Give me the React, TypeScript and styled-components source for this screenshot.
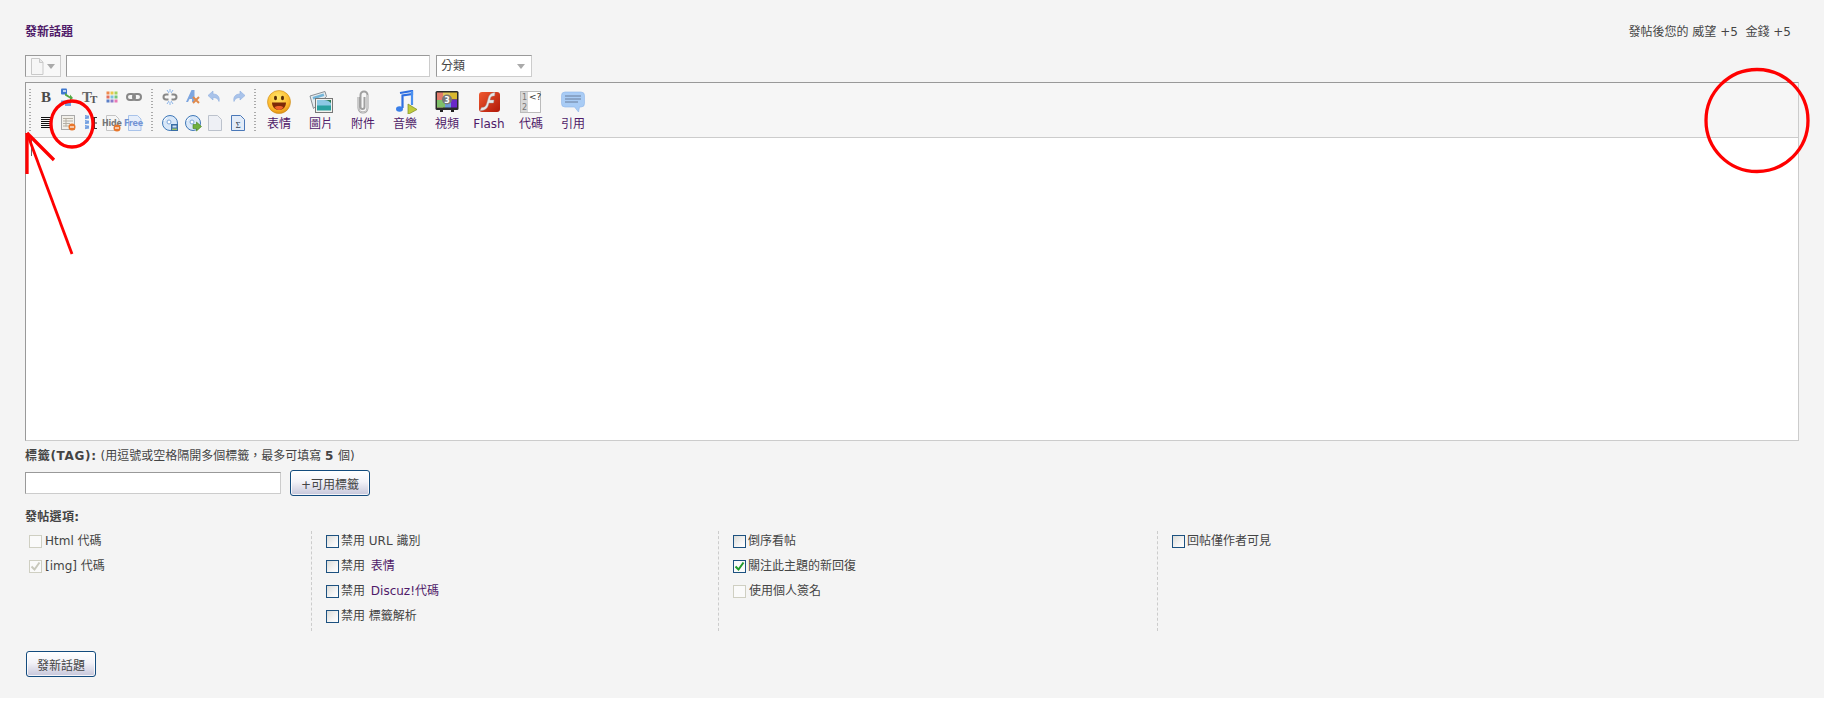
import React from "react";
import styled, { createGlobalStyle } from "styled-components";

const FONT = `"DejaVu Sans", "Noto Sans CJK TC", sans-serif`;
const PURPLE = "#4f1a68";

const Global = createGlobalStyle`
  html, body { margin: 0; padding: 0; background: #fff; }
  body { font: 12px/1.2 ${FONT}; color: #444; }
`;

const Page = styled.div`
  position: relative;
  box-sizing: border-box;
  width: 1824px;
  height: 698px;
  padding: 0 25px;
  background: #f4f4f4;
  overflow: hidden;
`;
const HeadRow = styled.div`
  display: flex;
  justify-content: space-between;
  align-items: center;
  height: 24px;
  padding-top: 20px;
  margin-bottom: 11px;
`;
const Title = styled.h1`
  margin: 0;
  font-size: 12px;
  font-weight: 700;
  color: ${PURPLE};
`;
const Credit = styled.div`
  margin-right: 8px;
  white-space: pre;
  color: #444;
`;
const FormRow = styled.div`
  display: flex;
  gap: 5px;
  height: 22px;
  margin-bottom: 5px;
`;
const boxBorders = `
  box-sizing: border-box;
  border: 1px solid;
  border-color: #999 #ccc #ccc #999;
`;
const IconSelect = styled.div`
  ${boxBorders}
  width: 36px;
  display: flex;
  align-items: center;
  padding-left: 4px;
  gap: 3px;
  background: #f8f8f8;
`;
const TextBox = styled.div<{ $w: number }>`
  ${boxBorders}
  width: ${(p) => p.$w}px;
  height: 22px;
  background: #fff;
`;
const TypeSelect = styled.div`
  ${boxBorders}
  width: 96px;
  margin-left: 1px;
  display: flex;
  align-items: center;
  justify-content: space-between;
  padding: 0 6px 0 4px;
  background: #fff;
  color: #444;
`;
const Caret = styled.span`
  width: 0;
  height: 0;
  border: 4px solid transparent;
  border-top: 5px solid #aaa;
  border-bottom: 0;
`;
const Editor = styled.div`
  box-sizing: border-box;
  height: 359px;
  border: 1px solid;
  border-color: #999 #ccc #ccc #999;
  background: #fff;
`;
const Toolbar = styled.div`
  box-sizing: border-box;
  display: flex;
  align-items: flex-start;
  height: 55px;
  padding-left: 3px;
  background: #f6f6f6;
  border-bottom: 1px solid #ccc;
`;
const Grip = styled.div<{ $after: number }>`
  display: flex;
  flex-direction: column;
  gap: 3px;
  flex: none;
  width: 2px;
  height: 43px;
  margin: 6px ${(p) => p.$after}px 0 0;
  &::before, &::after {
    content: "";
    flex: 1;
    background: repeating-linear-gradient(to bottom, #aaa 0 1px, transparent 1px 3px);
  }
`;
const SmallGrid = styled.div<{ $cell: number; $cols: number; $after: number }>`
  display: grid;
  flex: none;
  grid-template-columns: repeat(${(p) => p.$cols}, ${(p) => p.$cell}px);
  grid-auto-rows: 26px;
  padding-top: 1px;
  margin-right: ${(p) => p.$after}px;
`;
const SmallCell = styled.div`
  display: flex;
  align-items: center;
  justify-content: center;
`;
const BigBtn = styled.div`
  flex: none;
  width: 42px;
  height: 54px;
  display: flex;
  flex-direction: column;
  align-items: center;
  padding-top: 7px;
  box-sizing: border-box;
  gap: 3px;
  color: ${PURPLE};
  line-height: 14px;
`;
const EditArea = styled.div`
  padding-left: 5px;
`;
const TextCaret = styled.div`
  width: 1px;
  height: 18px;
  background: #666;
`;
const TagLabel = styled.div`
  margin-top: 7px;
  height: 16px;
  line-height: 16px;
  color: #444;
`;
const Strong = styled.strong`
  font-weight: 700;
  letter-spacing: 0.7px;
`;
const TagRow = styled.div`
  display: flex;
  align-items: center;
  gap: 9px;
  height: 26px;
  margin-top: 6px;
`;
const Button = styled.button`
  box-sizing: border-box;
  height: 26px;
  padding: 0 10px;
  border: 1px solid #134b7e;
  border-radius: 3px;
  background: linear-gradient(to bottom, #fff 0%, #f2f2f8 45%, #c6c6da 100%);
  box-shadow: inset 0 0 0 1px rgba(255, 255, 255, 0.8);
  color: #444;
  font: 12px ${FONT};
`;
const SubHead = styled.div`
  margin-top: 14px;
  height: 14px;
  line-height: 14px;
  font-weight: 700;
  letter-spacing: 0.3px;
  color: #444;
`;
const Options = styled.div`
  display: grid;
  grid-template-columns: 286px 407px 439px 1fr;
  margin-top: 7px;
  height: 100px;
`;
const OptCol = styled.div<{ $first?: boolean }>`
  box-sizing: border-box;
  display: flex;
  flex-direction: column;
  gap: 4px;
  padding-left: ${(p) => (p.$first ? 4 : 14)}px;
  border-left: ${(p) => (p.$first ? "0" : "1px dashed #ccc")};
`;
const OptRow = styled.label`
  display: flex;
  align-items: center;
  gap: 2px;
  height: 21px;
  color: #444;
  white-space: pre;
`;
const Check = styled.span<{ $muted?: boolean; $plain?: boolean }>`
  box-sizing: border-box;
  flex: none;
  display: flex;
  align-items: center;
  justify-content: center;
  width: 13px;
  height: 13px;
  margin-right: ${(p) => (p.$muted ? 1 : 0)}px;
  border: 1px solid ${(p) => (p.$muted ? "#cfcfc2" : "#1c5180")};
  background: ${(p) =>
    p.$muted || p.$plain ? "#fafafa" : "linear-gradient(135deg, #dcdcd8 0%, #f4f4f4 60%, #fff 100%)"};
`;
const Link = styled.span`
  color: ${PURPLE};
`;
const SubmitWrap = styled.div`
  margin-top: 20px;
  padding-left: 1px;
`;
const Overlay = styled.svg`
  position: absolute;
  top: 0;
  left: 0;
  width: 1824px;
  height: 709px;
  pointer-events: none;
`;

const Doc = ({ size = 14 }: { size?: number }) => (
  <svg width={size} height={size + 3} viewBox="0 0 14 17">
    <path d="M1.5.5h8l3.5 3.5v12.5h-11.500z" fill="#f6f6f6" stroke="#c9c9c9" />
    <path d="M9.500.5v4h3.500" fill="#e8e8e8" stroke="#c9c9c9" />
  </svg>
);

const S = ({ children, w = 18, h = 18 }: { children: React.ReactNode; w?: number; h?: number }) => (
  <svg width={w} height={h} viewBox={`0 0 ${w} ${h}`}>
    {children}
  </svg>
);

const small: React.ReactNode[] = [
  <S key="b">
    <text x="9" y="14" textAnchor="middle" fontFamily="Liberation Serif" fontWeight="700" fontSize="15" fill="#4a4a4a">B</text>
  </S>,
  <S key="col">
    <rect x="2" y="0.500" width="6" height="6" rx="1" fill="#3f78d0" />
    <rect x="4" y="2" width="3" height="2" fill="#bcd3f2" />
    <path d="M2 12.500h14v2h-4v3.500h-6v-3.500h-4z" fill="#6fa3e6" />
    <path d="M6 5l5 3.500v-2l3 3.500-3 2.500v-2l-5-3z" fill="#55a844" />
  </S>,
  <S key="tr">
    <text x="1" y="14" fontFamily="Liberation Serif" fontWeight="700" fontSize="15" fill="#666">T</text>
    <text x="9" y="14.500" fontFamily="Liberation Serif" fontWeight="700" fontSize="11" fill="#555">T</text>
  </S>,
  <S key="grid">
    {["#ef8a4c", "#e9c84a", "#a4d35e", "#e36f5c", "#7cc0e0", "#73c57a", "#5a7fc7", "#8b79c9", "#e878b5"].map((c, i) => (
      <rect key={c} x={3.500 + (i % 3) * 4} y={3.500 + Math.floor(i / 3) * 4} width="3" height="3" fill={c} />
    ))}
  </S>,
  <S key="link">
    <rect x="2" y="6" width="8" height="6" rx="3" fill="none" stroke="#888" strokeWidth="2" />
    <rect x="8" y="6" width="8" height="6" rx="3" fill="none" stroke="#888" strokeWidth="2" />
  </S>,
  <S key="unlink">
    <path d="M7.500 6.500H5a2.500 2.500 0 000 5h2.500M10.500 6.500H13a2.500 2.500 0 010 5h-2.500" fill="none" stroke="#888" strokeWidth="2" />
    <path d="M6 2l2 3M12 2l-2 3M6 16l2-3M12 16l-2-3M9 1v3M9 14v3" stroke="#8ab4ea" />
  </S>,
  <S key="clear">
    <path d="M2 14L7.500 2h3v12H8v-3H5.500l-1.500 3z" fill="#7ea6e0" />
    <path d="M9 9l6 6M15 9l-6 6" stroke="#e08a4c" strokeWidth="2" />
  </S>,
  <S key="undo">
    <path d="M7 3L2 7.500 7 12V9.500c3 0 5 1 6 4 1-4-1-7.500-6-7.500z" fill="#a9c3ea" stroke="#8eaedf" strokeWidth=".6" />
  </S>,
  <S key="redo">
    <path d="M11 3l5 4.500L11 12V9.500c-3 0-5 1-6 4-1-4 1-7.500 6-7.500z" fill="#a9c3ea" stroke="#8eaedf" strokeWidth=".6" />
  </S>,
  <S key="just">
    <path d="M4 3.500h10M4 5.500h10M4 7.500h10M4 9.500h10M4 11.500h10M4 13.500h10" stroke="#111" />
  </S>,
  <S key="table">
    <rect x="2.500" y="1.500" width="13" height="14" fill="#f2f0ea" stroke="#aaa" />
    <path d="M4 4.500h10M4 7h10M4 9.500h7M4 12h6M7 4.500v8" stroke="#b5b0a5" />
    <circle cx="13" cy="13" r="3.500" fill="#e8762b" />
    <path d="M11 13h4" stroke="#fff" strokeWidth="1.200" />
  </S>,
  <S key="www">
    <path d="M11 3.500h5M11 9h5M11 14.500h5M13.500 3.500v11" stroke="#333" />
    <g stroke="#6b9be0" fill="none">
      <path d="M4 1.500l4 .8-4 .8 4 .8-4 .8M4 6.500l4 .8-4 .8 4 .8-4 .8M4 11.500l4 .8-4 .8 4 .8-4 .8" />
    </g>
  </S>,
  <S key="hide" w={20}>
    <path d="M4.500 1.500h9l3.500 3.500v11.500h-12.500z" fill="#f6f6f6" stroke="#c4c4c4" />
    <text x="0" y="12" fontFamily="DejaVu Sans" fontWeight="700" fontSize="8" letterSpacing="-.2" fill="#777">Hide</text>
    <circle cx="15" cy="14" r="3.500" fill="#e8762b" />
    <path d="M13 14h4" stroke="#fff" strokeWidth="1.200" />
  </S>,
  <S key="free" w={20}>
    <path d="M4.500 1.500h9l3.500 3.500v11.500h-12.500z" fill="#e6eefa" stroke="#a9c3ea" />
    <text x="0" y="12" fontFamily="DejaVu Sans" fontWeight="700" fontSize="8" letterSpacing="-.2" fill="#7394d4">Free</text>
  </S>,
  <S key="disc1">
    <circle cx="9" cy="9" r="7.500" fill="#d8e7f8" stroke="#3f78b8" />
    <circle cx="8" cy="8" r="2" fill="#fff" stroke="#7ea6d8" />
    <path d="M3 7a5 5 0 013-3.500" stroke="#fff" fill="none" />
    <rect x="10" y="10" width="7" height="7" fill="#3a6ea5" />
    <rect x="11.500" y="11.500" width="4" height="2" fill="#cfe0f2" />
    <rect x="11" y="14.500" width="5" height="1.500" fill="#9cc46a" />
  </S>,
  <S key="disc2">
    <circle cx="9" cy="9" r="7.500" fill="#d8e7f8" stroke="#3f78b8" />
    <circle cx="8" cy="8" r="2" fill="#fff" stroke="#7ea6d8" />
    <path d="M3 7a5 5 0 013-3.500" stroke="#fff" fill="none" />
    <path d="M9 10.500h3.500V8l5 4.500-5 4.500v-2.500H9z" fill="#6fb03e" stroke="#47801f" strokeWidth=".6" />
  </S>,
  <S key="doc">
    <path d="M2.500 1.500h9l4 4v11h-13z" fill="#eef0f5" stroke="#bcc2cc" />
  </S>,
  <S key="sigma">
    <path d="M2.500 1.500h9l4 4v11h-13z" fill="#e3ecf8" stroke="#4a78b8" />
    <text x="9" y="14" textAnchor="middle" fontFamily="Liberation Serif" fontSize="9" fill="#345">Σ</text>
  </S>,
];

const big: { label: string; icon: React.ReactNode }[] = [
  {
    label: "表情",
    icon: (
      <S w={24} h={24}>
        <defs>
          <radialGradient id="sm" cx="45%" cy="30%" r="75%">
            <stop offset="0" stopColor="#ffe76a" />
            <stop offset=".7" stopColor="#fdb62a" />
            <stop offset="1" stopColor="#d88a10" />
          </radialGradient>
        </defs>
        <circle cx="12" cy="12" r="11.500" fill="url(#sm)" stroke="#c98a1a" strokeWidth=".6" />
        <ellipse cx="8.500" cy="8" rx="1.500" ry="2.200" fill="#5a2e08" />
        <ellipse cx="15.500" cy="8" rx="1.500" ry="2.200" fill="#5a2e08" />
        <path d="M5 12.500h14c0 4.500-3 7.500-7 7.500s-7-3-7-7.500z" fill="#7d2a08" />
        <path d="M7.500 17c2-1.500 7-1.500 9 0-1 2-2.800 3-4.500 3s-3.500-1-4.500-3z" fill="#f0642a" />
      </S>
    ),
  },
  {
    label: "圖片",
    icon: (
      <S w={24} h={24}>
        <path d="M1 6L16 1.500l1.500 5-13 12z" fill="#e6ecf0" stroke="#8a9096" />
        <path d="M3.500 7l11-3.500.8 2.500-11 3.500z" fill="#74b5d8" />
        <rect x="6.500" y="8.500" width="17" height="14" fill="#f2f2ee" stroke="#777" />
        <rect x="8" y="10" width="14" height="6" fill="#8cc7e4" />
        <rect x="8" y="15.500" width="14" height="5" fill="#2aa0a0" />
        <path d="M15 10c3 0 5 1 7 3v-3z" fill="#2b7a55" />
      </S>
    ),
  },
  {
    label: "附件",
    icon: (
      <S w={24} h={24}>
        <path d="M7.500 7v11a4.500 4.500 0 009 0V5a3.500 3.500 0 00-7 0v12a2 2 0 004 0V7" fill="none" stroke="#a0a0a0" strokeWidth="2" />
        <path d="M7.500 7v11a4.500 4.500 0 009 0V5" fill="none" stroke="#dcdcdc" strokeWidth=".7" />
      </S>
    ),
  },
  {
    label: "音樂",
    icon: (
      <S w={24} h={24}>
        <path d="M7 3l12-2v3L9.500 5.500V18" fill="none" stroke="#2f6fe0" strokeWidth="2.200" />
        <path d="M19 1v14" stroke="#4a90f0" strokeWidth="2.200" />
        <ellipse cx="6.500" cy="19" rx="3.500" ry="2.800" fill="#3a7fe8" />
        <path d="M15 14l9 5.500-9 5z" fill="#c0cc3a" stroke="#7a8a20" strokeWidth=".7" />
      </S>
    ),
  },
  {
    label: "視頻",
    icon: (
      <S w={24} h={24}>
        <rect x="0.500" y="1" width="23" height="19" rx="1.500" fill="#2a2a2a" />
        <rect x="2" y="2.500" width="6" height="15" fill="#e27a6a" />
        <rect x="8" y="2.500" width="7" height="7" fill="#e2c85a" />
        <rect x="15" y="2.500" width="7" height="7" fill="#d8b830" />
        <rect x="2" y="10" width="8" height="7.500" fill="#7fc068" />
        <rect x="10" y="10" width="6" height="7.500" fill="#6a9ad8" />
        <rect x="16" y="9.500" width="6" height="8" fill="#6a28c8" />
        <circle cx="12" cy="9.500" r="5" fill="#777" />
        <text x="12" y="12.500" textAnchor="middle" fontFamily="DejaVu Sans" fontWeight="700" fontSize="8" fill="#fff">3</text>
        <rect x="5" y="20" width="3" height="2" fill="#222" />
        <rect x="16" y="20" width="3" height="2" fill="#222" />
      </S>
    ),
  },
  {
    label: "Flash",
    icon: (
      <S w={24} h={24}>
        <defs>
          <linearGradient id="fl" x1="0" y1="0" x2="1" y2="1">
            <stop offset="0" stopColor="#f05a30" />
            <stop offset="1" stopColor="#b01808" />
          </linearGradient>
        </defs>
        <rect x="2" y="2" width="21" height="20" rx="3" fill="url(#fl)" />
        <path d="M18 2.500c-5 .5-6 3-7 6.500l-1.500 5c-.8 2.500-2 3.500-5 3.500L3 20.500c5 0 7.500-2 8.500-6l.5-1.500h4.500l.5-3h-4l.5-2c.5-1.500 1.500-2 4-2z" fill="#e8e8e8" stroke="#999" strokeWidth=".4" />
      </S>
    ),
  },
  {
    label: "代碼",
    icon: (
      <S w={24} h={24}>
        <rect x="1.500" y="1.500" width="20" height="21" fill="#fff" stroke="#bbb" />
        <rect x="2" y="2" width="7" height="20" fill="#d8d8d8" />
        <text x="5.500" y="10" textAnchor="middle" fontFamily="DejaVu Sans" fontSize="8" fill="#777">1</text>
        <text x="5.500" y="20" textAnchor="middle" fontFamily="DejaVu Sans" fontSize="8" fill="#777">2</text>
        <text x="10" y="10" fontFamily="DejaVu Sans" fontSize="9" fill="#333">&lt;?</text>
      </S>
    ),
  },
  {
    label: "引用",
    icon: (
      <S w={24} h={24}>
        <path d="M4 2h16a3.500 3.500 0 013.500 3.500v8A3.500 3.500 0 0120 17h-1.500l-1 5-4-5H4A3.500 3.500 0 01.5 13.500v-8A3.500 3.500 0 014 2z" fill="#a9ccf5" stroke="#8eb6ea" strokeWidth=".6" />
        <path d="M4 6h16M4 9h16M4 12h13" stroke="#6b7f9c" />
      </S>
    ),
  },
];

const Tick = ({ color }: { color: string }) => (
  <svg width="11" height="11" viewBox="0 0 11 11">
    <path d="M1.500 5.500l3 3 5-7" fill="none" stroke={color} strokeWidth="2" />
  </svg>
);

export default function App() {
  return (
    <Page>
      <Global />
      <HeadRow>
        <Title>發新話題</Title>
        <Credit>發帖後您的 威望 +5  金錢 +5</Credit>
      </HeadRow>
      <FormRow>
        <IconSelect>
          <Doc />
          <Caret />
        </IconSelect>
        <TextBox $w={364} />
        <TypeSelect>
          分類
          <Caret />
        </TypeSelect>
      </FormRow>
      <Editor>
        <Toolbar>
          <Grip $after={4} />
          <SmallGrid $cell={22} $cols={5} $after={6}>
            {[0, 1, 2, 3, 4, 9, 10, 11, 12, 13].map((i) => (
              <SmallCell key={i}>{small[i]}</SmallCell>
            ))}
          </SmallGrid>
          <Grip $after={6} />
          <SmallGrid $cell={22.500} $cols={4} $after={5}>
            {[5, 6, 7, 8, 14, 15, 16, 17].map((i) => (
              <SmallCell key={i}>{small[i]}</SmallCell>
            ))}
          </SmallGrid>
          <Grip $after={2} />
          {big.map((b) => (
            <BigBtn key={b.label}>
              {b.icon}
              {b.label}
            </BigBtn>
          ))}
        </Toolbar>
        <EditArea>
          <TextCaret />
        </EditArea>
      </Editor>
      <TagLabel>
        <Strong>標籤(TAG):</Strong> (用逗號或空格隔開多個標籤，最多可填寫 <Strong>5</Strong> 個)
      </TagLabel>
      <TagRow>
        <TextBox $w={256} />
        <Button>+可用標籤</Button>
      </TagRow>
      <SubHead>發帖選項:</SubHead>
      <Options>
        <OptCol $first>
          <OptRow><Check $muted />Html 代碼</OptRow>
          <OptRow><Check $muted><Tick color="#c8c8bc" /></Check>[img] 代碼</OptRow>
        </OptCol>
        <OptCol>
          <OptRow><Check />禁用 URL 識別</OptRow>
          <OptRow><Check />禁用 <Link>表情</Link></OptRow>
          <OptRow><Check />禁用 <Link>Discuz!代碼</Link></OptRow>
          <OptRow><Check />禁用 標籤解析</OptRow>
        </OptCol>
        <OptCol>
          <OptRow><Check />倒序看帖</OptRow>
          <OptRow><Check $plain><Tick color="#1f9a2a" /></Check>關注此主題的新回復</OptRow>
          <OptRow><Check $muted />使用個人簽名</OptRow>
        </OptCol>
        <OptCol>
          <OptRow><Check />回帖僅作者可見</OptRow>
        </OptCol>
      </Options>
      <SubmitWrap>
        <Button>發新話題</Button>
      </SubmitWrap>
      <Overlay viewBox="0 0 1824 709">
        <g fill="none" stroke="#f00" strokeWidth="3.300">
          <ellipse cx="72" cy="124" rx="21" ry="23" />
          <circle cx="1757" cy="120.500" r="51" />
          <path d="M27 133V174M27 133L54 160" />
          <path d="M27 133L72 254" strokeWidth="2.800" />
        </g>
      </Overlay>
    </Page>
  );
}
